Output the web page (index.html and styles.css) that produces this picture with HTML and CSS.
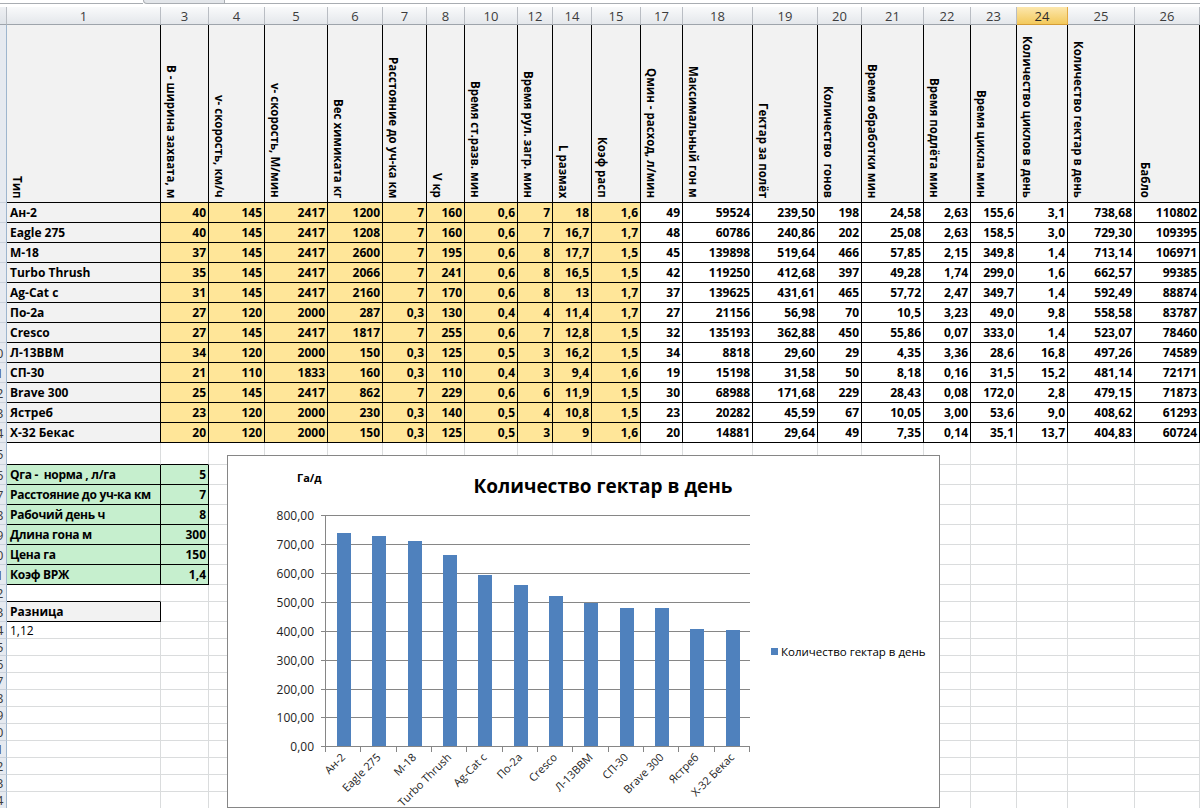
FILE: index.html
```html
<!DOCTYPE html>
<html lang="ru">
<head>
<meta charset="utf-8">
<title>Количество гектар в день</title>
<link rel="stylesheet" href="styles.css">
</head>
<body>
<div class="top"><div class="ln ln1"></div><div class="tab"></div><div class="ln ln2"></div></div>

<div class="row h18 ch"><b class="corner"></b><i>1</i><i>3</i><i>4</i><i>5</i><i>6</i><i>7</i><i>8</i><i>10</i><i>12</i><i>14</i><i>15</i><i>17</i><i>18</i><i>19</i><i>20</i><i>21</i><i>22</i><i>23</i><i class="sel">24</i><i>25</i><i>26</i></div>

<div class="row h178 hr"><b class="rn"><span>2</span></b><i><span class="v">Тип</span></i><i><span class="v">В - ширина захвата, м</span></i><i><span class="v">v- скорость, км/ч</span></i><i><span class="v">v- скорость, М/мин</span></i><i><span class="v">Вес химиката кг</span></i><i><span class="v">Расстояние до уч-ка км</span></i><i><span class="v">V кр</span></i><i><span class="v">Время ст.разв. мин</span></i><i><span class="v">Время рул. загр. мин</span></i><i><span class="v">L размах</span></i><i><span class="v">Коэф расп</span></i><i><span class="v">Qмин - расход, л/мин</span></i><i><span class="v">Максимальный гон м</span></i><i><span class="v">Гектар за полёт</span></i><i><span class="v">Количество  гонов</span></i><i><span class="v">Время обработки мин</span></i><i><span class="v">Время подлёта мин</span></i><i><span class="v">Время цикла мин</span></i><i><span class="v">Количество циклов в день</span></i><i><span class="v">Количество гектар в день</span></i><i><span class="v">Бабло</span></i></div>

<div class="row h20 dr"><b class="rn"><span>3</span></b><i>Ан-2</i><i>40</i><i>145</i><i>2417</i><i>1200</i><i>7</i><i>160</i><i>0,6</i><i>7</i><i>18</i><i>1,6</i><i>49</i><i>59524</i><i>239,50</i><i>198</i><i>24,58</i><i>2,63</i><i>155,6</i><i>3,1</i><i>738,68</i><i>110802</i></div>
<div class="row h20 dr"><b class="rn"><span>4</span></b><i>Eagle 275</i><i>40</i><i>145</i><i>2417</i><i>1208</i><i>7</i><i>160</i><i>0,6</i><i>7</i><i>16,7</i><i>1,7</i><i>48</i><i>60786</i><i>240,86</i><i>202</i><i>25,08</i><i>2,63</i><i>158,5</i><i>3,0</i><i>729,30</i><i>109395</i></div>
<div class="row h20 dr"><b class="rn"><span>5</span></b><i>M-18</i><i>37</i><i>145</i><i>2417</i><i>2600</i><i>7</i><i>195</i><i>0,6</i><i>8</i><i>17,7</i><i>1,5</i><i>45</i><i>139898</i><i>519,64</i><i>466</i><i>57,85</i><i>2,15</i><i>349,8</i><i>1,4</i><i>713,14</i><i>106971</i></div>
<div class="row h20 dr"><b class="rn"><span>6</span></b><i>Turbo Thrush</i><i>35</i><i>145</i><i>2417</i><i>2066</i><i>7</i><i>241</i><i>0,6</i><i>8</i><i>16,5</i><i>1,5</i><i>42</i><i>119250</i><i>412,68</i><i>397</i><i>49,28</i><i>1,74</i><i>299,0</i><i>1,6</i><i>662,57</i><i>99385</i></div>
<div class="row h20 dr"><b class="rn"><span>7</span></b><i>Ag-Cat c</i><i>31</i><i>145</i><i>2417</i><i>2160</i><i>7</i><i>170</i><i>0,6</i><i>8</i><i>13</i><i>1,7</i><i>37</i><i>139625</i><i>431,61</i><i>465</i><i>57,72</i><i>2,47</i><i>349,7</i><i>1,4</i><i>592,49</i><i>88874</i></div>
<div class="row h20 dr"><b class="rn"><span>8</span></b><i>По-2а</i><i>27</i><i>120</i><i>2000</i><i>287</i><i>0,3</i><i>130</i><i>0,4</i><i>4</i><i>11,4</i><i>1,7</i><i>27</i><i>21156</i><i>56,98</i><i>70</i><i>10,5</i><i>3,23</i><i>49,0</i><i>9,8</i><i>558,58</i><i>83787</i></div>
<div class="row h20 dr"><b class="rn"><span>9</span></b><i>Cresco</i><i>27</i><i>145</i><i>2417</i><i>1817</i><i>7</i><i>255</i><i>0,6</i><i>7</i><i>12,8</i><i>1,5</i><i>32</i><i>135193</i><i>362,88</i><i>450</i><i>55,86</i><i>0,07</i><i>333,0</i><i>1,4</i><i>523,07</i><i>78460</i></div>
<div class="row h20 dr"><b class="rn"><span>10</span></b><i>Л-13ВВМ</i><i>34</i><i>120</i><i>2000</i><i>150</i><i>0,3</i><i>125</i><i>0,5</i><i>3</i><i>16,2</i><i>1,5</i><i>34</i><i>8818</i><i>29,60</i><i>29</i><i>4,35</i><i>3,36</i><i>28,6</i><i>16,8</i><i>497,26</i><i>74589</i></div>
<div class="row h20 dr"><b class="rn"><span>11</span></b><i>СП-30</i><i>21</i><i>110</i><i>1833</i><i>160</i><i>0,3</i><i>110</i><i>0,4</i><i>3</i><i>9,4</i><i>1,6</i><i>19</i><i>15198</i><i>31,58</i><i>50</i><i>8,18</i><i>0,16</i><i>31,5</i><i>15,2</i><i>481,14</i><i>72171</i></div>
<div class="row h20 dr"><b class="rn"><span>12</span></b><i>Brave 300</i><i>25</i><i>145</i><i>2417</i><i>862</i><i>7</i><i>229</i><i>0,6</i><i>6</i><i>11,9</i><i>1,5</i><i>30</i><i>68988</i><i>171,68</i><i>229</i><i>28,43</i><i>0,08</i><i>172,0</i><i>2,8</i><i>479,15</i><i>71873</i></div>
<div class="row h20 dr"><b class="rn"><span>13</span></b><i>Ястреб</i><i>23</i><i>120</i><i>2000</i><i>230</i><i>0,3</i><i>140</i><i>0,5</i><i>4</i><i>10,8</i><i>1,5</i><i>23</i><i>20282</i><i>45,59</i><i>67</i><i>10,05</i><i>3,00</i><i>53,6</i><i>9,0</i><i>408,62</i><i>61293</i></div>
<div class="row h20 dr"><b class="rn"><span>14</span></b><i>Х-32 Бекас</i><i>20</i><i>120</i><i>2000</i><i>150</i><i>0,3</i><i>125</i><i>0,5</i><i>3</i><i>9</i><i>1,6</i><i>20</i><i>14881</i><i>29,64</i><i>49</i><i>7,35</i><i>0,14</i><i>35,1</i><i>13,7</i><i>404,83</i><i>60724</i></div>

<div class="row h22"><b class="rn"><span>15</span></b><i class="kb"></i><i class="kb"></i><i></i><i></i><i></i><i></i><i></i><i></i><i></i><i></i><i></i><i></i><i></i><i></i><i></i><i></i><i></i><i></i><i></i><i></i><i></i></div>
<div class="row h20 pr"><b class="rn"><span>16</span></b><i>Qга -  норма , л/га</i><i>5</i><i></i><i></i><i></i><i></i><i></i><i></i><i></i><i></i><i></i><i></i><i></i><i></i><i></i><i></i><i></i><i></i><i></i><i></i><i></i></div>
<div class="row h20 pr"><b class="rn"><span>17</span></b><i>Расстояние до уч-ка км</i><i>7</i><i></i><i></i><i></i><i></i><i></i><i></i><i></i><i></i><i></i><i></i><i></i><i></i><i></i><i></i><i></i><i></i><i></i><i></i><i></i></div>
<div class="row h20 pr"><b class="rn"><span>18</span></b><i>Рабочий день ч</i><i>8</i><i></i><i></i><i></i><i></i><i></i><i></i><i></i><i></i><i></i><i></i><i></i><i></i><i></i><i></i><i></i><i></i><i></i><i></i><i></i></div>
<div class="row h20 pr"><b class="rn"><span>19</span></b><i>Длина гона м</i><i>300</i><i></i><i></i><i></i><i></i><i></i><i></i><i></i><i></i><i></i><i></i><i></i><i></i><i></i><i></i><i></i><i></i><i></i><i></i><i></i></div>
<div class="row h20 pr"><b class="rn"><span>20</span></b><i>Цена га</i><i>150</i><i></i><i></i><i></i><i></i><i></i><i></i><i></i><i></i><i></i><i></i><i></i><i></i><i></i><i></i><i></i><i></i><i></i><i></i><i></i></div>
<div class="row h20 pr"><b class="rn"><span>21</span></b><i>Коэф ВРЖ</i><i>1,4</i><i></i><i></i><i></i><i></i><i></i><i></i><i></i><i></i><i></i><i></i><i></i><i></i><i></i><i></i><i></i><i></i><i></i><i></i><i></i></div>
<div class="row h17"><b class="rn"><span>22</span></b><i class="kb"></i><i></i><i></i><i></i><i></i><i></i><i></i><i></i><i></i><i></i><i></i><i></i><i></i><i></i><i></i><i></i><i></i><i></i><i></i><i></i><i></i></div>
<div class="row h20"><b class="rn"><span>23</span></b><i class="lbl">Разница</i><i></i><i></i><i></i><i></i><i></i><i></i><i></i><i></i><i></i><i></i><i></i><i></i><i></i><i></i><i></i><i></i><i></i><i></i><i></i><i></i></div>
<div class="row h17"><b class="rn"><span>24</span></b><i class="pl">1,12</i><i></i><i></i><i></i><i></i><i></i><i></i><i></i><i></i><i></i><i></i><i></i><i></i><i></i><i></i><i></i><i></i><i></i><i></i><i></i><i></i></div>
<div class="row h17"><b class="rn"><span>25</span></b><i></i><i></i><i></i><i></i><i></i><i></i><i></i><i></i><i></i><i></i><i></i><i></i><i></i><i></i><i></i><i></i><i></i><i></i><i></i><i></i><i></i></div>
<div class="row h17"><b class="rn"><span>26</span></b><i></i><i></i><i></i><i></i><i></i><i></i><i></i><i></i><i></i><i></i><i></i><i></i><i></i><i></i><i></i><i></i><i></i><i></i><i></i><i></i><i></i></div>
<div class="row h17"><b class="rn"><span>27</span></b><i></i><i></i><i></i><i></i><i></i><i></i><i></i><i></i><i></i><i></i><i></i><i></i><i></i><i></i><i></i><i></i><i></i><i></i><i></i><i></i><i></i></div>
<div class="row h17"><b class="rn"><span>28</span></b><i></i><i></i><i></i><i></i><i></i><i></i><i></i><i></i><i></i><i></i><i></i><i></i><i></i><i></i><i></i><i></i><i></i><i></i><i></i><i></i><i></i></div>
<div class="row h17"><b class="rn"><span>29</span></b><i></i><i></i><i></i><i></i><i></i><i></i><i></i><i></i><i></i><i></i><i></i><i></i><i></i><i></i><i></i><i></i><i></i><i></i><i></i><i></i><i></i></div>
<div class="row h17"><b class="rn"><span>30</span></b><i></i><i></i><i></i><i></i><i></i><i></i><i></i><i></i><i></i><i></i><i></i><i></i><i></i><i></i><i></i><i></i><i></i><i></i><i></i><i></i><i></i></div>
<div class="row h17"><b class="rn"><span>31</span></b><i></i><i></i><i></i><i></i><i></i><i></i><i></i><i></i><i></i><i></i><i></i><i></i><i></i><i></i><i></i><i></i><i></i><i></i><i></i><i></i><i></i></div>
<div class="row h17"><b class="rn"><span>32</span></b><i></i><i></i><i></i><i></i><i></i><i></i><i></i><i></i><i></i><i></i><i></i><i></i><i></i><i></i><i></i><i></i><i></i><i></i><i></i><i></i><i></i></div>
<div class="row h17"><b class="rn"><span>33</span></b><i></i><i></i><i></i><i></i><i></i><i></i><i></i><i></i><i></i><i></i><i></i><i></i><i></i><i></i><i></i><i></i><i></i><i></i><i></i><i></i><i></i></div>
<div class="row h17"><b class="rn"><span>34</span></b><i></i><i></i><i></i><i></i><i></i><i></i><i></i><i></i><i></i><i></i><i></i><i></i><i></i><i></i><i></i><i></i><i></i><i></i><i></i><i></i><i></i></div>

<div class="chart">
<svg width="711" height="351" viewBox="0 0 711 351" xmlns="http://www.w3.org/2000/svg">
<text class="unit" x="69" y="26">Га/д</text>
<text class="ttl" x="375" y="37" text-anchor="middle">Количество гектар в день</text>
<g class="gl">
<line x1="93" y1="59.5" x2="522" y2="59.5"/>
<line x1="93" y1="88.5" x2="522" y2="88.5"/>
<line x1="93" y1="117.5" x2="522" y2="117.5"/>
<line x1="93" y1="146.5" x2="522" y2="146.5"/>
<line x1="93" y1="175.5" x2="522" y2="175.5"/>
<line x1="93" y1="204.5" x2="522" y2="204.5"/>
<line x1="93" y1="233.5" x2="522" y2="233.5"/>
<line x1="93" y1="261.5" x2="522" y2="261.5"/>
</g>
<g class="bar">
<rect x="109" y="77" width="14" height="214"/>
<rect x="144" y="80" width="14" height="211"/>
<rect x="180" y="85" width="14" height="206"/>
<rect x="215" y="99" width="14" height="192"/>
<rect x="250" y="119" width="14" height="172"/>
<rect x="286" y="129" width="14" height="162"/>
<rect x="321" y="140" width="14" height="151"/>
<rect x="356" y="147" width="14" height="144"/>
<rect x="392" y="152" width="14" height="139"/>
<rect x="427" y="152" width="14" height="139"/>
<rect x="462" y="173" width="14" height="118"/>
<rect x="498" y="174" width="14" height="117"/>
</g>
<g class="axl">
<line x1="97.5" y1="59" x2="97.5" y2="291"/>
<line x1="93" y1="290.5" x2="522" y2="290.5"/>
<line x1="97.5" y1="290" x2="97.5" y2="296"/>
<line x1="132.5" y1="290" x2="132.5" y2="296"/>
<line x1="168.5" y1="290" x2="168.5" y2="296"/>
<line x1="203.5" y1="290" x2="203.5" y2="296"/>
<line x1="238.5" y1="290" x2="238.5" y2="296"/>
<line x1="274.5" y1="290" x2="274.5" y2="296"/>
<line x1="309.5" y1="290" x2="309.5" y2="296"/>
<line x1="344.5" y1="290" x2="344.5" y2="296"/>
<line x1="380.5" y1="290" x2="380.5" y2="296"/>
<line x1="415.5" y1="290" x2="415.5" y2="296"/>
<line x1="450.5" y1="290" x2="450.5" y2="296"/>
<line x1="486.5" y1="290" x2="486.5" y2="296"/>
<line x1="521.5" y1="290" x2="521.5" y2="296"/>
</g>
<g class="ax" text-anchor="end">
<text x="86" y="63.5">800,00</text>
<text x="86" y="92.5">700,00</text>
<text x="86" y="121.5">600,00</text>
<text x="86" y="150.5">500,00</text>
<text x="86" y="179.5">400,00</text>
<text x="86" y="208.5">300,00</text>
<text x="86" y="237.5">200,00</text>
<text x="86" y="265.5">100,00</text>
<text x="86" y="294.5">0,00</text>
</g>
<g class="axx" text-anchor="end">
<text transform="translate(118 302) rotate(-45)">Ан-2</text>
<text transform="translate(153.5 302) rotate(-45)">Eagle 275</text>
<text transform="translate(189 302) rotate(-45)">M-18</text>
<text transform="translate(224 302) rotate(-45)">Turbo Thrush</text>
<text transform="translate(259.5 302) rotate(-45)">Ag-Cat c</text>
<text transform="translate(295 302) rotate(-45)">По-2а</text>
<text transform="translate(330 302) rotate(-45)">Cresco</text>
<text transform="translate(365.5 302) rotate(-45)">Л-13ВВМ</text>
<text transform="translate(401 302) rotate(-45)">СП-30</text>
<text transform="translate(436.5 302) rotate(-45)">Brave 300</text>
<text transform="translate(471.5 302) rotate(-45)">Ястреб</text>
<text transform="translate(507 302) rotate(-45)">Х-32 Бекас</text>
</g>
<rect class="bar" x="543" y="192" width="7" height="7"/>
<text class="lg" x="553" y="200">Количество гектар в день</text>
</svg>
</div>
</body>
</html>
```

FILE: styles.css
```css
* { box-sizing: border-box; margin: 0; padding: 0; }
html, body { width: 1200px; height: 808px; overflow: hidden; background: #fff; }
body {
  position: relative;
  font-family: "Open Sans", "Liberation Sans", Arial, sans-serif;
  font-size: 12px;
  color: #000;
}

/* top formula-bar edge */
.top { display: flex; align-items: flex-start; height: 7px; }
.top .ln { height: 4px; border-bottom: 1px solid #a9adb2; }
.top .ln1 { width: 143px; }
.top .ln2 { flex: 1; }
.top .tab {
  width: 82px; height: 4px;
  background: #e3e6ea;
  border: 1px solid #a9adb2; border-top: none;
  border-bottom-left-radius: 5px;
}

/* sheet rows */
.row {
  display: grid;
  grid-template-columns: 7px 154px 48px 56px 63px 55px 44px 38px 53px 35px 39px 49px 42px 70px 65px 44px 62px 47px 46px 51px 67px 65px;
}
.row > * {
  display: flex;
  align-items: center;
  overflow: hidden;
  white-space: pre;
  font-style: normal;
  font-weight: 400;
  border-right: 1px solid #dadcdd;
  border-bottom: 1px solid #dadcdd;
}
.h17 { height: 17px; }
.h18 { height: 18px; }
.h20 { height: 20px; }
.h22 { height: 22px; }
.h178 { height: 178px; }

/* column header strip */
.ch > * {
  justify-content: center;
  background: linear-gradient(#f9fafb, #e4e7eb);
  border-right-color: #b9bdc3;
  border-bottom-color: #9ea4ab;
  color: #3c3c3c;
  font-size: 13px;
}
.ch > .sel {
  background: linear-gradient(#fce7ad, #f3c95b);
  border-right-color: #e2aa44;
  border-bottom-color: #d49c36;
  color: #2b2b2b;
}
.ch > .corner { background: linear-gradient(#eef0f3, #dfe3e8); }

/* row headers */
.row > .rn {
  justify-content: flex-end;
  background: #e6eaf0;
  border-right-color: #9eb6ce;
  border-bottom-color: #c9d1db;
  color: #3c3c3c;
  font-size: 13px;
}
.rn span { flex: none; width: 20px; text-align: center; }

/* rotated header row */
.hr > i {
  align-items: flex-end;
  padding: 0 0 4px 3px;
  background: #f2f2f2;
  font-weight: 700;
  font-size: 11.5px;
  border-right-color: #000;
  border-bottom-color: #000;
}
.v { writing-mode: vertical-rl; line-height: 15px; }

/* data rows */
.dr > i {
  justify-content: flex-end;
  padding-right: 2px;
  font-weight: 700;
  border-right-color: #000;
  border-bottom-color: #000;
}
.dr > i:nth-child(2) {
  justify-content: flex-start;
  padding: 0 0 0 3px;
  background: #f2f2f2;
}
.dr > i:nth-child(n+3):nth-child(-n+12) { background: #ffe699; }

/* parameter block */
.pr > i:nth-child(2),
.pr > i:nth-child(3) {
  background: #c6efce;
  font-weight: 700;
  border-right-color: #000;
  border-bottom-color: #000;
}
.pr > i:nth-child(2) { padding-left: 3px; letter-spacing: -0.3px; }
.pr > i:nth-child(3) { justify-content: flex-end; padding-right: 2px; }

.row > .kb { border-bottom-color: #000; }
.row > .lbl {
  padding-left: 3px;
  background: #f2f2f2;
  font-weight: 700;
  border-right-color: #000;
  border-bottom-color: #000;
}
.row > .pl { padding-left: 3px; }

/* chart */
.chart {
  position: absolute;
  left: 227px; top: 455px;
  width: 713px; height: 353px;
  border: 1px solid #868686;
  background: #fff;
}
.chart svg { display: block; }
.gl line { stroke: #868686; stroke-width: 1; }
.axl line { stroke: #868686; stroke-width: 1; }
.bar { fill: #4f81bd; }
.ax { font-family: "Open Sans", "Liberation Sans", sans-serif; font-size: 12px; fill: #1e1e1e; }
.axx { font-family: "Open Sans", "Liberation Sans", sans-serif; font-size: 11px; fill: #1e1e1e; }
.ttl { font-family: "Open Sans", "Liberation Sans", sans-serif; font-size: 19px; font-weight: 700; fill: #000; }
.unit { font-family: "Open Sans", "Liberation Sans", sans-serif; font-size: 11px; font-weight: 700; fill: #000; }
.lg { font-family: "Open Sans", "Liberation Sans", sans-serif; font-size: 11.5px; fill: #000; }
```
